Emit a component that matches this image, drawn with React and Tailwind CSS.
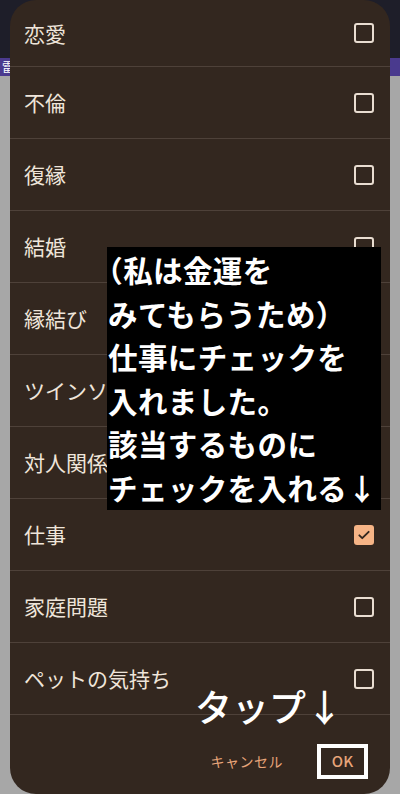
import React from "react";

const items = [
  { label: "恋愛", checked: false },
  { label: "不倫", checked: false },
  { label: "復縁", checked: false },
  { label: "結婚", checked: false },
  { label: "縁結び", checked: false },
  { label: "ツインソウル", checked: false },
  { label: "対人関係", checked: false },
  { label: "仕事", checked: true },
  { label: "家庭問題", checked: false },
  { label: "ペットの気持ち", checked: false },
];

function Box({ checked }) {
  if (checked) {
    return (
      <div className="w-[20px] h-[20px] rounded-[3px] bg-[#f6b486] flex items-center justify-center">
        <svg width="14" height="14" viewBox="0 0 24 24" fill="none" stroke="#33271f" strokeWidth="3.2" strokeLinecap="round" strokeLinejoin="round">
          <path d="M4 12.5l5 5L20 6.5" />
        </svg>
      </div>
    );
  }
  return <div className="w-[20px] h-[20px] rounded-[3px] border-2 border-[#e9ddd1]" />;
}

export default function App() {
  return (
    <div className="relative w-[400px] h-[794px] overflow-hidden font-['Noto_Sans_CJK_JP',sans-serif]">
      <div className="flex flex-col h-full">
        <div className="h-[58px] bg-[#1e1e29]" />
        <div className="h-[18px] bg-[#4a3a8e] flex items-center pl-[2px]">
          <span className="text-[12px] leading-none text-white">雷</span>
        </div>
        <div className="flex-1 bg-[#a7a7a7]" />
      </div>

      <div className="absolute left-[10px] right-[10px] top-0 bottom-0 rounded-[26px] bg-[#33271f] flex flex-col">
        {items.map((it, i) => (
          <div
            key={it.label}
            className={
              (i === 0 ? "h-[67px] " : "h-[72px] ") +
              "shrink-0 border-b border-[#4e4139] flex items-center justify-between pl-[14px] pr-[16px]"
            }
          >
            <span className="text-[21px] text-[#efe5da] leading-none">{it.label}</span>
            <Box checked={it.checked} />
          </div>
        ))}
        <div className="flex-1 flex items-center justify-end pr-[22px] gap-[34px] pt-[14px]">
          <span className="text-[14px] text-[#e8a57a] tracking-[0.5px]">キャンセル</span>
          <div className="w-[51px] h-[35px] border-[4px] border-white flex items-center justify-center">
            <span className="text-[15px] font-medium text-[#e8a57a]">OK</span>
          </div>
        </div>
      </div>

      <div className="absolute left-[107px] top-[247px] w-[274px] h-[263px] bg-black pl-[1px] pt-[1px]">
        <div className="text-white text-[29.5px] leading-[43.5px] font-bold whitespace-nowrap tracking-[0.4px]">
          <div>
            <span className="[font-feature-settings:'halt']">（</span>私は金運を
          </div>
          <div>みてもらうため）</div>
          <div>仕事にチェックを</div>
          <div>入れました。</div>
          <div>該当するものに</div>
          <div>チェックを入れる↓</div>
        </div>
      </div>

      <div className="absolute left-[195px] top-[688px] text-white text-[37px] leading-none font-medium whitespace-nowrap">
        タップ↓
      </div>
    </div>
  );
}
